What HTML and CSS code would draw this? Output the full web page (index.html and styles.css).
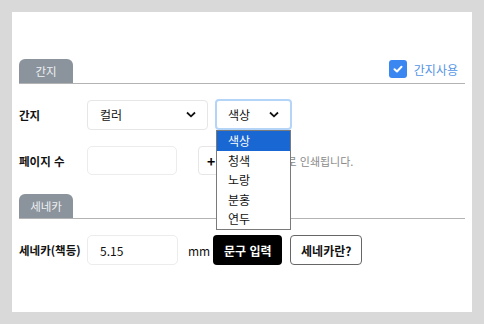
FILE: index.html
```html
<!doctype html><html lang="ko">
<head><meta charset="utf-8"/><title>간지 설정</title>
<meta name="viewport" content="width=device-width, initial-scale=1">
<link rel="stylesheet" href="styles.css">
</head>
<body>
<div class="panel">

	<div class="sec_head">
		<div class="tab">간지</div>
		<label class="use_chk"><span class="chk"><svg width="12" height="12" viewBox="0 0 12 12"><path d="M2.5 6.2 L5 8.5 L9.5 3.8" fill="none" stroke="#fff" stroke-width="2" stroke-linecap="round" stroke-linejoin="round"/></svg></span>간지사용</label>
	</div>

	<div class="row r1">
		<div class="lbl">간지</div>
		<div class="ctrls">
			<div class="sel sel_kind">컬러<svg class="chev" width="10" height="7" viewBox="0 0 10 7"><path d="M1 1.5 L5 5.3 L9 1.5" fill="none" stroke="#111" stroke-width="1.8"/></svg></div>
			<div class="sel sel_color focus">색상<svg class="chev" width="10" height="7" viewBox="0 0 10 7"><path d="M1 1.5 L5 5.3 L9 1.5" fill="none" stroke="#111" stroke-width="1.8"/></svg>
				<ul class="dropdown">
					<li class="on">색상</li>
					<li>청색</li>
					<li>노랑</li>
					<li>분홍</li>
					<li>연두</li>
				</ul>
			</div>
		</div>
	</div>

	<div class="row r2">
		<div class="lbl">페이지 수</div>
		<div class="ctrls">
			<div class="inp inp_page"></div>
			<button type="button" class="btn_plus">+</button>
			<span class="note">흰색 간지로 인쇄됩니다.</span>
		</div>
	</div>

	<div class="sec_head sec2">
		<div class="tab">세네카</div>
	</div>

	<div class="row r3">
		<div class="lbl">세네카(책등)</div>
		<div class="ctrls">
			<div class="inp inp_spine">5.15</div>
			<span class="unit">mm</span>
			<button type="button" class="btn_black">문구 입력</button>
			<button type="button" class="btn_line">세네카란?</button>
		</div>
	</div>

</div>
</body></html>
```
FILE: styles.css
```css
html, body {margin: 0; padding: 0;}
body {
	background: #d9d9d9;
	padding: 12px;
	font-family: "Noto Sans CJK KR", "Noto Sans", sans-serif;
	font-size: 12px;
	color: #111;
}

.panel {
	background: #fff;
	height: 300px;
	padding: 47px 7px 0 7px;
	box-sizing: border-box;
	position: relative;
}

/* 섹션 탭 */
.sec_head {
	display: flex;
	justify-content: space-between;
	align-items: flex-end;
	border-bottom: 1px solid #b3b3b3;
}
.sec2 {margin-top: 19px;}
.tab {
	width: 54px;
	height: 24px;
	line-height: 24px;
	text-align: center;
	background: #8b939c;
	color: #eef0f3;
	border-radius: 6px 6px 0 0;
	font-size: 11.5px;
}
.use_chk {
	display: flex;
	align-items: center;
	gap: 7px;
	margin: 0 7px 5px 0;
	color: #5595e6;
	font-size: 12px;
}
.chk {
	width: 18px;
	height: 18px;
	border-radius: 3px;
	background: #3a87f2;
	display: flex;
	align-items: center;
	justify-content: center;
}

/* 행 */
.row {
	display: grid;
	grid-template-columns: 68px auto;
	align-items: center;
	margin-top: 15px;
}
.r2 {margin-top: 16px;}
.r3 {margin-top: 16px;}
.lbl {font-weight: bold; font-size: 11.5px;}
.ctrls {display: flex; align-items: center;}

.sel {
	position: relative;
	height: 30px;
	box-sizing: border-box;
	border: 1px solid #e6e6e6;
	border-radius: 4px;
	padding: 0 11px 0 12px;
	display: flex;
	align-items: center;
	justify-content: space-between;
}
.sel_kind {width: 121px;}
.sel_color {width: 77px; margin-left: 7px; height: 31px;}
.focus {border: 2px solid #b4d4f8; padding-left: 11px;}

.dropdown {
	position: absolute;
	top: 29px;
	left: -1px;
	width: 75px;
	margin: 0;
	padding: 0;
	list-style: none;
	background: #fff;
	border: 1px solid #7a7a7a;
	box-sizing: border-box;
	z-index: 2;
}
.dropdown li {
	height: 19.6px;
	line-height: 20px;
	padding-left: 11px;
}
.dropdown li.on {background: #1967d2; color: #fff;}

.inp {
	height: 30px;
	box-sizing: border-box;
	border: 1px solid #ececec;
	border-radius: 5px;
	padding: 0 12px;
	display: flex;
	align-items: center;
}
.inp_page {width: 90px; height: 29px;}
.inp_spine {width: 91px;}

.btn_plus {
	margin-left: 21px;
	width: 34px;
	height: 29px;
	border: 1px solid #e6e6e6;
	border-radius: 4px;
	background: #fff;
	font-family: inherit;
	font-size: 14px;
	font-weight: bold;
	padding: 0 0 0 8px;
	text-align: left;
}
.note {margin-left: 11px; color: #8a8a8a; font-size: 11px;}

.unit {margin-left: 10px; font-size: 12px;}
.btn_black, .btn_line {
	height: 30px;
	font-family: inherit;
	font-size: 12px;
	font-weight: bold;
	border-radius: 4px;
	padding: 0;
}
.btn_black {
	margin-left: 3px;
	width: 69px;
	background: #000;
	color: #fff;
	border: 0;
}
.btn_line {
	margin-left: 8px;
	width: 72px;
	background: #fff;
	color: #111;
	border: 1.5px solid #666;
}
```
